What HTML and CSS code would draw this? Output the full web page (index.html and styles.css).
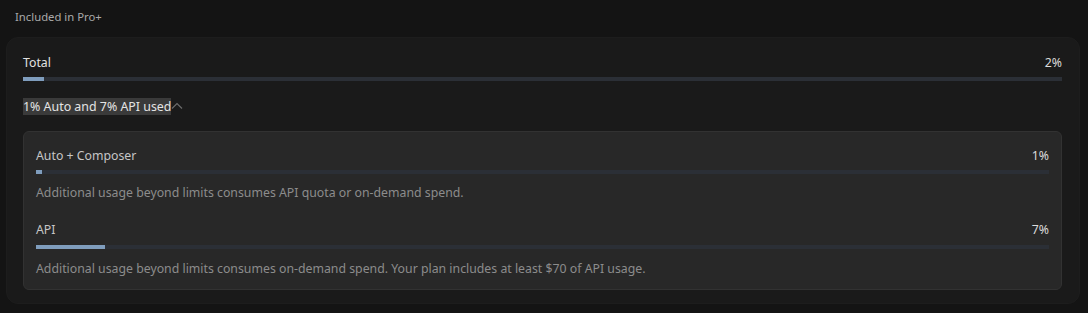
FILE: index.html
```html
<!DOCTYPE html>
<html lang="en">
<head>
    <meta charset="UTF-8">
    <title>Usage</title>
    <link rel="stylesheet" href="styles.css">
</head>
<body>
    <div class="page">
        <p class="section-title">Included in Pro+</p>

        <div class="usage-card">
            <div class="meter-row">
                <span class="meter-label">Total</span>
                <span class="meter-value">2%</span>
            </div>
            <div class="track"><div class="fill" style="width: 2%;"></div></div>

            <div class="toggle">
                <span class="toggle-text">1% Auto and 7% API used</span>
                <svg class="chevron" width="12" height="8" viewBox="0 0 12 8">
                    <path d="M1 6.5 L6 1.5 L11 6.5" fill="none" stroke="#6b6b6b" stroke-width="1.2"/>
                </svg>
            </div>

            <div class="detail-card">
                <div class="meter-row">
                    <span class="meter-label sub">Auto + Composer</span>
                    <span class="meter-value">1%</span>
                </div>
                <div class="track"><div class="fill" style="width: 0.6%;"></div></div>
                <p class="note">Additional usage beyond limits consumes API quota or on-demand spend.</p>

                <div class="meter-row second">
                    <span class="meter-label sub">API</span>
                    <span class="meter-value">7%</span>
                </div>
                <div class="track low"><div class="fill" style="width: 6.8%;"></div></div>
                <p class="note last">Additional usage beyond limits consumes on-demand spend. Your plan includes at least $70 of API usage.</p>
            </div>
        </div>
    </div>
</body>
</html>
```

FILE: styles.css
```css
body {
    margin: 0;
    background: #141414;
    font-family: "Noto Sans", "Open Sans", sans-serif;
    color: #d6d6d6;
}

.page {
    padding: 9px 8px 0 6px;
}

.section-title {
    margin: 0;
    padding-left: 9px;
    font-size: 11.3px;
    line-height: 16px;
    color: #a9a9a9;
}

.usage-card {
    margin-top: 12px;
    background: #1a1a1a;
    border: 1px solid #1d1d1d;
    border-radius: 12px;
    padding: 17px 17px 13px 16px;
}

.meter-row {
    display: flex;
    justify-content: space-between;
    font-size: 12.3px;
    line-height: 16px;
}

.meter-label {
    color: #e2e2e2;
}

.meter-label.sub {
    color: #c6c6c6;
}

.meter-value {
    color: #dcdcdc;
}

.track {
    height: 4px;
    margin-top: 6px;
    background: #2b2f36;
}

.track.low {
    margin-top: 7px;
}

.fill {
    height: 100%;
    background: #7f9dbd;
}

.toggle {
    display: flex;
    align-items: center;
    margin-top: 17px;
    font-size: 12.4px;
    line-height: 17px;
}

.toggle-text {
    background: #3a3a3a;
    color: #e4e4e4;
    padding-top: 1px;
    line-height: 16px;
}

.chevron {
    margin-top: -2px;
}

.detail-card {
    margin-top: 16px;
    background: #282828;
    border: 1px solid #323232;
    border-radius: 6px;
    padding: 16px 12px 12px 12px;
}

.meter-row.second {
    margin-top: 21px;
}

.note {
    margin: 11px 0 0;
    font-size: 12.3px;
    line-height: 16px;
    color: #8c8c8c;
}

.note.last {
    margin-top: 12px;
}
```
